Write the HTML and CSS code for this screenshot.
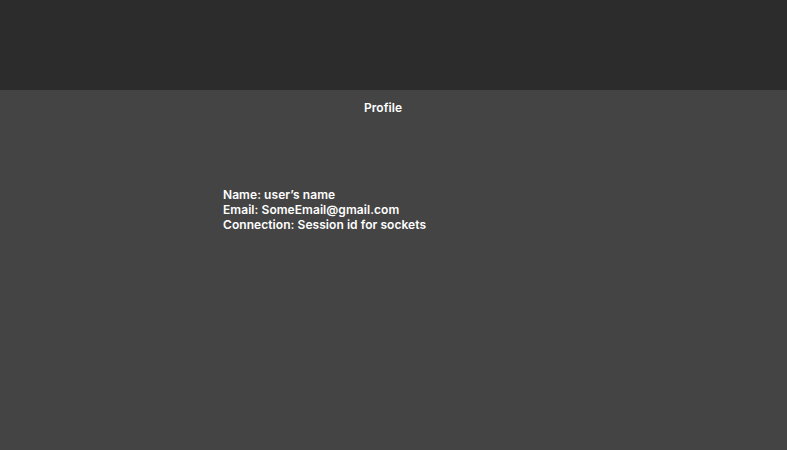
FILE: index.html
```html
<!DOCTYPE html>
<html>
<head>
<meta charset="utf-8">
<link rel="stylesheet" href="styles.css">
</head>
<body>
<header class="topbar"></header>
<main class="page">
  <h1 class="title">Profile</h1>
  <div class="info">
    <div>Name: user’s name</div>
    <div>Email: SomeEmail@gmail.com</div>
    <div>Connection: Session id for sockets</div>
  </div>
</main>
</body>
</html>
```

FILE: styles.css
```css
html, body { margin: 0; padding: 0; height: 100%; }
body {
  background: #444444;
  font-family: Inter, "Noto Sans", sans-serif;
  color: #ffffff;
  font-weight: 600;
  font-size: 12px;
  letter-spacing: 0.06px;
}
.topbar { height: 90px; background: #2c2c2c; }
.page { display: flex; flex-direction: column; }
.title {
  margin: 0;
  padding-top: 10px;
  padding-right: 21px;
  font-size: 12px;
  font-weight: 600;
  text-align: center;
  line-height: 15px;
}
.info {
  margin-top: 72px;
  padding-left: 223px;
  line-height: 15px;
}
```
